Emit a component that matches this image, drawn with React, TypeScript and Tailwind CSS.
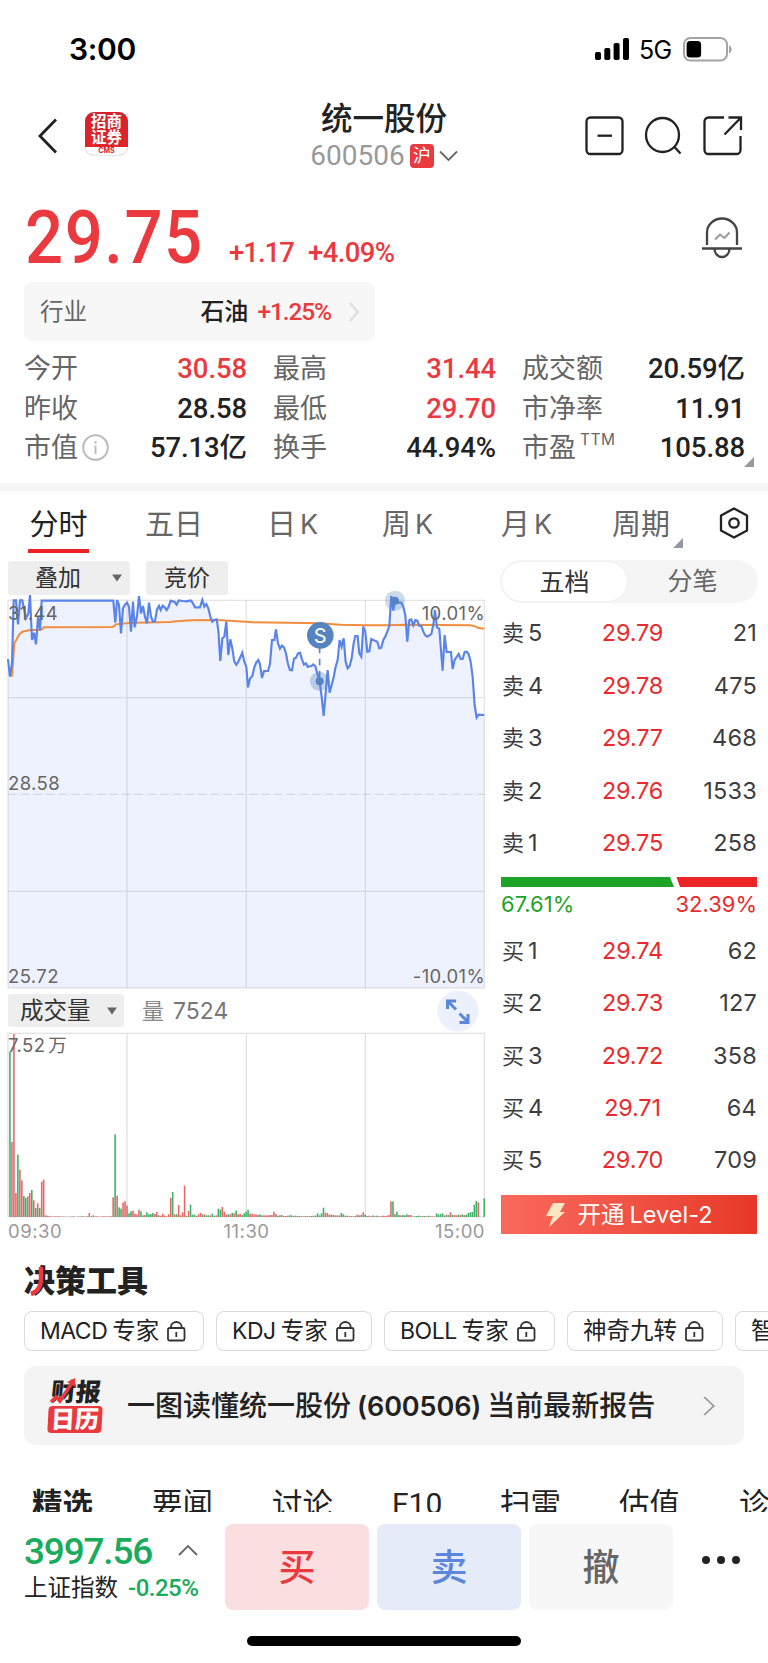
import type { ReactNode } from 'react'

// Both charts are drawn at three units per pixel
const PRICE_LINE =
  '24,207 30,260 36,220 41,31 48,31 54,103 60,31 67,31 78,85 85,70 90,15 96,150 102,128 108,163 114,80 120,120 125,32 340,32 346,98 351,30 357,44 363,130 369,55 375,44 381,38 387,50 393,125 399,35 404,112 411,78 417,18 423,70 429,48 435,80 441,100 447,38 453,80 459,94 465,94 471,58 477,48 482,60 488,47 494,52 500,60 506,50 512,32 524,36 530,44 536,31 548,33 560,34 572,31 578,38 585,52 600,52 607,30 613,50 619,42 625,55 631,80 637,95 643,90 650,88 655,120 661,213 667,145 673,140 679,95 685,195 691,148 697,175 703,215 709,224 715,215 727,188 733,215 739,230 744,292 750,266 757,258 763,232 769,217 775,210 780,222 786,264 792,243 804,243 810,222 816,150 823,150 828,118 834,160 840,176 846,167 852,172 858,190 864,222 870,240 876,241 882,206 888,203 894,190 900,188 906,208 912,224 918,220 923,230 934,228 940,223 946,228 952,250 959,275 965,320 971,378 977,310 983,240 989,308 995,285 1001,262 1007,230 1013,210 1019,150 1025,170 1031,145 1037,215 1043,235 1049,228 1055,205 1061,160 1066,138 1073,138 1078,190 1084,200 1090,110 1096,125 1102,185 1108,184 1114,147 1120,150 1132,155 1138,175 1144,173 1150,150 1156,140 1162,125 1168,108 1174,18 1180,62 1185,32 1192,38 1204,38 1210,50 1216,75 1222,155 1228,90 1234,88 1240,106 1246,90 1252,92 1258,107 1264,108 1270,125 1276,136 1282,140 1288,136 1294,132 1300,105 1305,60 1311,112 1318,116 1323,180 1328,242 1334,135 1340,186 1353,186 1358,237 1364,210 1376,192 1382,207 1388,207 1394,186 1400,185 1406,192 1412,215 1418,260 1424,345 1430,383 1436,374 1453,375'

const AVG_LINE =
  '36,260 43,160 50,148 58,133 67,125 90,120 122,120 132,112 338,111 348,103 380,100 400,98 510,96 530,94 575,91 650,90 700,93 760,97 960,100 1020,104 1100,106 1160,106 1220,104 1410,106 1425,109 1436,114 1453,116'

// One entry per minute: colour and bar height
const VOLUME =
  'g496 r225 r549 r72 g187 r142 r110 g63 g57 r62 r72 g81 r50 g27 r41 g27 r106 r112 r5 r4 r3 r1 r1 r2 r2 r2 r1 r1 r1 r0 r1 r1 g2 r0 r1 r1 g2 r2 r1 g2 r12 r2 r5 g1 r2 r1 r1 r2 r2 r1 r2 r2 r59 g248 r64 g29 g25 r43 r47 r34 g11 g17 r19 r10 r8 r22 g17 g5 r6 g14 g8 g9 g12 r9 r15 g5 r4 r10 r4 r2 r8 r57 g75 r8 g8 r36 r5 r14 r94 g3 r18 g37 g7 g7 r3 r8 r13 g8 r8 g5 g5 r5 g10 g4 r5 g25 g22 r30 r16 r7 g8 r8 g12 r11 g19 r8 r10 g6 g11 g16 g22 r10 r10 r8 r8 g6 g8 r5 r5 r5 r5 r6 r6 r16 r9 g4 g5 r6 r3 r3 g4 g5 g5 r3 g4 r3 r3 g2 r2 r3 g2 r3 g3 r4 g4 g11 g5 g11 g28 r13 r12 r7 g7 r6 r5 r5 r5 g12 g8 r4 g4 r2 r3 g2 r3 r7 g5 r6 r14 g7 g3 r4 r2 g5 r2 g4 r2 r2 r4 r3 r4 r6 r47 g47 r9 g16 g6 r5 g6 g5 g8 r6 r6 r1 g2 g3 g4 g2 r3 g3 r2 g4 r2 r2 r1 g11 g8 g9 g11 g5 r7 g6 r14 g7 r6 r5 g7 r6 g8 r6 g7 g12 g14 g15 g37 g48 r44 r0 r0 g56'

const sells = [['5', '29.79', '21'], ['4', '29.78', '475'], ['3', '29.77', '468'], ['2', '29.76', '1533'], ['1', '29.75', '258']]
const buys = [['1', '29.74', '62'], ['2', '29.73', '127'], ['3', '29.72', '358'], ['4', '29.71', '64'], ['5', '29.70', '709']]

function Caret() {
  return (
    <svg width="10" height="8" viewBox="0 0 10 8">
      <path d="M0 .5h10L5 7.5z" fill="#666" />
    </svg>
  )
}

function Chevron({ className, stroke, width = 2 }: { className: string; stroke: string; width?: number }) {
  return (
    <svg className={className} viewBox="0 0 10 20" fill="none" stroke={stroke} strokeWidth={width} preserveAspectRatio="none">
      <path d="M1 1l8 9-8 9" />
    </svg>
  )
}

function StatusBar() {
  return (
    <div className="flex h-[98px] shrink-0 items-center pl-[69px] pr-[36px]">
      <span className="text-[30px] font-semibold tracking-[-0.3px] text-black">3:00</span>
      <svg className="ml-auto" width="35" height="24" viewBox="0 0 35 24">
        <rect x="0" y="15" width="6" height="8" rx="1.8" />
        <rect x="9.3" y="11" width="6" height="12" rx="1.8" />
        <rect x="18.6" y="6" width="6" height="17" rx="1.8" />
        <rect x="28" y="1" width="6" height="22" rx="1.8" />
      </svg>
      <span className="ml-[9px] mt-[3px] w-[34px] text-[25px] tracking-[-0.8px] text-black">5G</span>
      <svg className="ml-[10px]" width="49" height="25" viewBox="0 0 49 25">
        <rect x="1" y="1" width="43" height="22.5" rx="6.5" fill="none" stroke="#a3a3a3" strokeWidth="2" />
        <rect x="3.6" y="4" width="14.5" height="16.5" rx="3.5" />
        <path d="M46 8.2a4.5 4.5 0 0 1 0 8.2z" fill="#a3a3a3" />
      </svg>
    </div>
  )
}

function Header() {
  return (
    <div className="flex h-[76px] shrink-0 items-center pl-[38px] pr-[25px]">
      <svg width="20" height="36" viewBox="0 0 20 36" fill="none" stroke="#222" strokeWidth="2.8">
        <path d="M18 1.5L2 18l16 16.5" />
      </svg>
      <div className="ml-[27px] mt-[-4px] flex h-[44px] w-[43px] flex-col overflow-hidden rounded-[9px] border-b border-gray-200 bg-gradient-to-b from-[#d3222a] to-[#e2262a] text-center text-white">
        <div className="flex h-[36px] flex-col items-center justify-center text-[15.5px] font-bold leading-[16px]">
          <span>招商</span>
          <span>证券</span>
        </div>
        <div className="h-[8px] bg-white text-[7px] font-bold leading-[7px] text-[#d3222a]">CMS</div>
      </div>
      <div className="flex flex-1 flex-col items-center pl-[55px]">
        <div className="pt-[2px] text-[31.5px] font-medium leading-[38px] text-[#222]">统一股份</div>
        <div className="flex h-[36px] items-center">
          <span className="font-[Roboto] text-[28px] text-[#999]">600506</span>
          <span className="ml-[5px] flex size-[24px] items-center justify-center rounded-[4px] bg-[#ea3a3f] text-[18px] text-white">沪</span>
          <svg className="ml-[5px]" width="19" height="12" viewBox="0 0 19 12" fill="none" stroke="#666" strokeWidth="1.8">
            <path d="M1 1.5l8.5 8.5L18 1.5" />
          </svg>
        </div>
      </div>
      <svg width="158" height="40" viewBox="0 0 158 40" fill="none" stroke="#222" strokeWidth="2.3">
        <rect x="1.5" y="1.5" width="36" height="36.5" rx="4" />
        <path d="M12.500 19.700H27" />
        <ellipse cx="77.500" cy="19" rx="16.500" ry="17" />
        <path d="M89.500 31l6 6.500" />
        <path d="M139 1.500h-15.500a4 4 0 0 0-4 4V34a4 4 0 0 0 4 4h28a4 4 0 0 0 4-4V20M143.500 1.500h12.500V14M155.500 2l-16 16.500" />
      </svg>
    </div>
  )
}

function PriceRow() {
  return (
    <div className="flex h-[102px] shrink-0 pl-[25px] pr-[26px] font-[Roboto] font-medium text-[#ea3a3f]">
      <span className="mt-[26px] w-[204px] origin-left scale-x-90 text-[74.500px] leading-[76px] tracking-[1.700px]">29.75</span>
      <span className="mt-[61px] w-[79px] text-[27.500px] leading-[36px] tracking-[-1px]">+1.17</span>
      <span className="mt-[61px] text-[27.500px] leading-[36px] tracking-[-0.600px]">+4.09%</span>
      <svg className="ml-auto mt-[43px]" width="40" height="42" viewBox="0 0 40 42" fill="none" stroke="#444" strokeWidth="2.300">
        <path d="M0 31.500h40M5 28V15.500a15 14 0 0 1 30 0V28M12.500 32a7.500 8 0 0 0 15 0" />
        <path d="M13 22.500l5-5 4.500 3.500 5-5.500" stroke="#999" strokeWidth="2" />
      </svg>
    </div>
  )
}

function Stat({ label, value, red, extra }: { label: string; value: string; red?: boolean; extra?: ReactNode }) {
  return (
    <div className="flex items-center">
      <span className="text-[27px] text-[#666]">{label}</span>
      {extra}
      <span className={`ml-auto font-[Roboto,'Noto_Sans_CJK_SC'] text-[27.500px] font-medium tracking-[-0.1px] ${red ? 'text-[#ea3a3f]' : 'text-[#222]'}`}>{value}</span>
    </div>
  )
}

function Quote() {
  return (
    <div className="relative flex h-[207px] shrink-0 flex-col px-[24px] pt-[6px]">
      <div className="flex h-[59px] w-[351px] items-center rounded-[8px] bg-[#f7f7f7] px-[16px] pt-px">
        <span className="text-[23.500px] text-[#666]">行业</span>
        <span className="ml-auto text-[24px] font-medium text-[#222]">石油</span>
        <span className="ml-[9px] font-[Roboto] text-[24.500px] font-medium tracking-[-1.100px] text-[#ea3a3f]">+1.25%</span>
        <Chevron className="ml-[18px] h-[20px] w-[10px]" stroke="#ddd" />
      </div>
      <div className="mt-[8px] grid grid-cols-[223px_223px_223px] grid-rows-[39.500px_39.500px_39.500px] gap-x-[26px]">
        <Stat label="今开" value="30.58" red />
        <Stat label="最高" value="31.44" red />
        <Stat label="成交额" value="20.59亿" />
        <Stat label="昨收" value="28.58" />
        <Stat label="最低" value="29.70" red />
        <Stat label="市净率" value="11.91" />
        <Stat
          label="市值"
          value="57.13亿"
          extra={
            <svg className="ml-[4px]" width="27" height="27" viewBox="0 0 27 27" fill="none" stroke="#bbb" strokeWidth="2">
              <circle cx="13.500" cy="13.500" r="12.300" />
              <path d="M13.500 11.500V20M13.500 7v2.500" />
            </svg>
          }
        />
        <Stat label="换手" value="44.94%" />
        <Stat label="市盈" value="105.88" extra={<span className="mb-[17px] ml-[4px] text-[15.500px] tracking-[0.5px] text-[#666]">TTM</span>} />
      </div>
      <svg className="absolute right-[14px] top-[181px]" width="10" height="10" viewBox="0 0 10 10">
        <path d="M10 0v10H0z" fill="#999" />
      </svg>
    </div>
  )
}

function PeriodTabs() {
  return (
    <div className="grid h-[70px] shrink-0 grid-cols-[117px_122px_115px_119px_107px_101px_1fr] pl-[28px] text-[29px] text-[#666]">
      <div className="flex h-[62px] w-[61px] items-center justify-center border-b-[4px] border-[#ee2224] pt-[8px] text-[#222]">分时</div>
      <div className="flex h-[66px] items-center">五日</div>
      <div className="flex h-[66px] items-center gap-[4px]">日<span className="text-[27px]">K</span></div>
      <div className="flex h-[66px] items-center gap-[4px]">周<span className="text-[27px]">K</span></div>
      <div className="flex h-[66px] items-center gap-[4px]">月<span className="text-[27px]">K</span></div>
      <div className="relative flex h-[66px] items-center pl-[4px]">
        周期
        <svg className="absolute left-[65px] top-[47px]" width="10" height="10" viewBox="0 0 10 10">
          <path d="M10 0v10H0z" fill="#9599a3" />
        </svg>
      </div>
      <svg className="ml-[10px] mt-[16px]" width="30" height="32" viewBox="0 0 30 32" fill="none" stroke="#222" strokeWidth="2.300">
        <path d="M15 1.500L28 8.500v15L15 30.500 2 23.500v-15z" strokeLinejoin="round" />
        <circle cx="15" cy="16" r="4.700" />
      </svg>
    </div>
  )
}

function PriceChart() {
  return (
    <div className="relative mt-[2px] h-[393px] text-[18.500px] leading-[18px] tracking-[0.400px] text-[#666]">
      <svg className="block overflow-visible" width="476.300" height="393" viewBox="24 21 1429 1179" fill="none">
        <polygon points={`24,1194 ${PRICE_LINE} 1453,1194`} fill="#eef2fe" />
        <g stroke="#000" strokeOpacity="0.1" strokeWidth="4">
          <rect x="24" y="31" width="1429" height="1163" />
          <path d="M381 31v1163M739 31v1163M1096 31v1163M24 323h1429M24 904h1429" />
          <path d="M24 613h1429" strokeDasharray="26 12" />
        </g>
        <polyline points={AVG_LINE} stroke="#f28c3e" strokeWidth="6" />
        <polyline points={PRICE_LINE} stroke="#5a84ea" strokeWidth="6.500" />
        <g fill="#5584c0">
          <circle cx="959" cy="274" r="29" fillOpacity="0.35" />
          <circle cx="959" cy="274" r="12" />
          <circle cx="1185" cy="32" r="30" fillOpacity="0.3" />
          <circle cx="1185" cy="32" r="12" />
          <path d="M959 170v100" stroke="#5584c0" strokeWidth="5" strokeDasharray="20 16" />
          <circle cx="961" cy="136" r="40" />
        </g>
        <text x="961" y="158" textAnchor="middle" fontSize="60" fontFamily="Inter" fill="#fff">S</text>
      </svg>
      <span className="absolute left-0 top-[7px]">31.44</span>
      <span className="absolute right-0 top-[7px]">10.01%</span>
      <span className="absolute left-0 top-[177px]">28.58</span>
      <span className="absolute bottom-[5px] left-0">25.72</span>
      <span className="absolute bottom-[5px] right-0">-10.01%</span>
    </div>
  )
}

function VolumeChart() {
  return (
    <div className="relative h-[187px]">
      <svg className="block overflow-visible" width="476.300" height="187" viewBox="24 213 1429 561" fill="none">
        <g stroke="#e2e2e4" strokeWidth="4">
          <rect x="24" y="220" width="1429" height="550" />
          <path d="M381 220v550M739 220v550M1096 220v550" />
        </g>
        {VOLUME.split(' ').map((v, i) => {
          const h = Number(v.slice(1))
          return <rect key={i} x={24 + 5.954 * (i + 1) - 2.500} y={771 - h} width="4.800" height={h} fill={v[0] === 'g' ? '#3fb26a' : '#e8686a'} />
        })}
      </svg>
      <span className="absolute left-0 top-[5px] text-[18.500px] leading-[18px] tracking-[0.400px] text-[#666]">
        7.52<span className="ml-[3px]">万</span>
      </span>
    </div>
  )
}

function ChartColumn() {
  return (
    <div className="ml-[8px] flex w-[477px] flex-col">
      <div className="flex h-[34px] gap-[16px] text-[23px] leading-[35px] text-[#333]">
        <div className="flex w-[122px] items-center rounded-[3px] bg-[#eee] pl-[27px] pr-[8px]">
          叠加<span className="ml-auto"><Caret /></span>
        </div>
        <div className="w-[82px] rounded-[3px] bg-[#eee] text-center">竞价</div>
      </div>
      <PriceChart />
      <div className="flex h-[41px] items-center">
        <div className="flex h-[33px] w-[116px] items-center rounded-[3px] bg-[#eee] pl-[12px] pr-[7px] pt-px text-[23.500px] text-[#333]">
          成交量<span className="ml-auto"><Caret /></span>
        </div>
        <span className="ml-[18px] pt-px text-[22px] text-[#888]">量</span>
        <span className="ml-[9px] pt-px text-[23px] text-[#777]">7524</span>
        <svg className="ml-auto mr-[6px]" width="42" height="42" viewBox="0 0 42 42" fill="none" stroke="#5b86dc" strokeWidth="3">
          <circle cx="21" cy="21" r="20.500" fill="#ebf0fb" stroke="none" />
          <path d="M19 11h-8.500v8M11 11.500l8 8M31 24v8.500h-8.500M31 32l-8.500-8.500" />
        </svg>
      </div>
      <VolumeChart />
      <div className="flex justify-between pt-[3px] text-[18.500px] leading-[20px] tracking-[0.500px] text-[#999]">
        <span>09:30</span>
        <span className="mr-[4px]">11:30</span>
        <span>15:00</span>
      </div>
    </div>
  )
}

function Level({ side, row }: { side: string; row: string[] }) {
  return (
    <div className="flex h-[52.400px] items-center pl-[1px] text-[23.500px] text-[#3d3d3f]">
      <span className="w-[99px] text-[22px]">
        {side}<span className="ml-[4px] text-[23.500px]">{row[0]}</span>
      </span>
      <span className="w-[63px] text-center tracking-[-0.200px] text-[#ea2a2c]">{row[1]}</span>
      <span className="ml-auto tracking-[0.200px]">{row[2]}</span>
    </div>
  )
}

function OrderBook() {
  return (
    <div className="ml-[16px] flex w-[256px] flex-col">
      <div className="-mx-px mt-[-1px] flex h-[43px] rounded-full bg-[#f5f5f5] p-[1px] text-center text-[25px] leading-[40px] text-[#666]">
        <div className="w-[127px] rounded-full border border-[#efefef] bg-white text-[#333]">五档</div>
        <div className="flex-1">分笔</div>
      </div>
      <div className="mt-[4px]">
        {sells.map(r => <Level key={r[0]} side="卖" row={r} />)}
      </div>
      <svg className="mt-[8px] h-[10px] shrink-0" width="256" height="10" viewBox="0 0 256 10">
        <path d="M0 0h169l4 10H0z" fill="#1ea329" />
        <path d="M175.500 0H256v10h-77z" fill="#ee2526" />
      </svg>
      <div className="mt-[7px] flex justify-between text-[22px] leading-[20px]">
        <span className="text-[#1ea329]">67.61%</span>
        <span className="text-[#ea2a2c]">32.39%</span>
      </div>
      <div className="mt-[10.500px]">
        {buys.map(r => <Level key={r[0]} side="买" row={r} />)}
      </div>
      <div className="mt-[8.500px] flex h-[39px] items-center justify-center bg-gradient-to-r from-[#f9695c] to-[#e73828] pt-px text-[23.500px] text-white">
        <svg className="mr-[11px]" width="21" height="24" viewBox="0 0 21 24">
          <path d="M8 0h12l-5 9h5L4 24l4-11H1z" fill="#ffe6c0" />
        </svg>
        开通<span className="ml-[5px]">Level-2</span>
      </div>
    </div>
  )
}

function Chip({ latin, label, width }: { latin?: string; label: string; width: string }) {
  return (
    <div className={`flex h-[40px] shrink-0 items-center rounded-[8px] border-[1.500px] border-[#d9d9d9] pl-[15px] text-[23.500px] text-[#222] ${width}`}>
      {latin && <span className="mr-[5px] text-[23px] tracking-[-0.500px]">{latin}</span>}
      {label}
      <svg className="ml-[8px] shrink-0" width="19" height="21" viewBox="0 0 19 21" fill="none" stroke="#333" strokeWidth="1.800">
        <rect x="1" y="7" width="16.500" height="12.500" rx="1.500" />
        <path d="M4 7V5.500a5.300 4.500 0 0 1 10.600 0V7M9.300 11v5" />
      </svg>
    </div>
  )
}

function Tools() {
  return (
    <div className="flex h-[204px] shrink-0 flex-col pl-[24px] pt-[20px]">
      <div className="relative text-[31px] font-black leading-[40px] text-[#222]">
        决策工具
        <svg className="absolute left-[6px] top-[5px]" width="14" height="31" viewBox="0 0 14 31" fill="none" stroke="#ea3a3f" strokeWidth="4.500">
          <path d="M11 1v14Q10 25 1 28" />
        </svg>
      </div>
      <div className="mt-[10px] flex gap-[12px] overflow-hidden">
        <Chip latin="MACD" label="专家" width="w-[180px]" />
        <Chip latin="KDJ" label="专家" width="w-[156px]" />
        <Chip latin="BOLL" label="专家" width="w-[171px]" />
        <Chip label="神奇九转" width="w-[156px]" />
        <Chip label="智能盯盘" width="w-[156px]" />
      </div>
      <div className="mt-[15px] flex h-[79px] w-[720px] shrink-0 items-center rounded-[12px] bg-[#f4f4f4] pl-[24px] pr-[29px] pt-px">
        <div className="relative h-[56px] w-[55px]">
          <div className="-skew-x-6 pl-[3px] text-[25px] font-black leading-[28px] text-[#222]">财报</div>
          <div className="flex h-[27px] w-[54px] -skew-x-3 items-center justify-center rounded-[4px] bg-[#ea3a3f] text-[24px] font-black text-white">日历</div>
          <svg className="absolute left-[2px] top-0" width="28" height="28" viewBox="0 0 28 28" fill="none" stroke="#ea3a3f" strokeWidth="3.500">
            <path d="M1 24l5-5 4 4L22 5" />
            <path d="M17 4l8-4 .5 9z" fill="#ea3a3f" stroke="none" />
          </svg>
        </div>
        <span className="ml-[24px] text-[28px] font-medium text-[#222]">一图读懂统一股份</span>
        <span className="ml-[6px] text-[27px] font-semibold tracking-[-0.100px] text-[#222]">(600506)</span>
        <span className="ml-[6px] text-[28px] font-medium text-[#222]">当前最新报告</span>
        <Chevron className="ml-auto h-[20px] w-[12px]" stroke="#999" width={1.600} />
      </div>
    </div>
  )
}

function NewsTabs() {
  return (
    <div className="flex h-[67px] shrink-0 overflow-hidden pl-[32px] pt-[37px] text-[30.500px] leading-[44px] text-[#222]">
      <span className="w-[120px] shrink-0 font-bold">精选</span>
      <span className="w-[120px] shrink-0">要闻</span>
      <span className="w-[120px] shrink-0">讨论</span>
      <span className="w-[108px] shrink-0 font-[Roboto] text-[30px]">F10</span>
      <span className="w-[119px] shrink-0">扫雷</span>
      <span className="w-[120px] shrink-0">估值</span>
      <span className="shrink-0">诊股</span>
    </div>
  )
}

function TradeBar() {
  return (
    <div className="flex h-[151px] shrink-0 flex-col bg-white">
      <div className="flex pl-[24px] pt-[12px]">
        <div className="w-[201px]">
          <div className="flex h-[54px] items-center font-[Roboto] text-[37px] font-medium tracking-[-1.200px] text-[#1aab5c]">
            3997.56
            <svg className="-mt-[3px] ml-[26px]" width="20" height="12" viewBox="0 0 20 12" fill="none" stroke="#666" strokeWidth="1.800">
              <path d="M1 11l9-9 9 9" />
            </svg>
          </div>
          <div className="flex h-[20px] items-center">
            <span className="text-[23.500px] text-[#222]">上证指数</span>
            <span className="ml-[10px] font-[Roboto] text-[24px] font-medium tracking-[-0.500px] text-[#1aab5c]">-0.25%</span>
          </div>
        </div>
        <div className="flex gap-[8px] text-center text-[37px] font-medium leading-[88px]">
          <div className="h-[86px] w-[144px] rounded-[8px] bg-[#fbdfe0] text-[#ea3a3f]">买</div>
          <div className="h-[86px] w-[144px] rounded-[8px] bg-[#e5ebf8] text-[#5b86dc]">卖</div>
          <div className="h-[86px] w-[144px] rounded-[8px] bg-[#f7f7f7] text-[#666]">撤</div>
        </div>
        <div className="ml-[29px] mt-[32px] flex gap-[7px]">
          <i className="size-[8px] rounded-full bg-[#222]" />
          <i className="size-[8px] rounded-full bg-[#222]" />
          <i className="size-[8px] rounded-full bg-[#222]" />
        </div>
      </div>
      <div className="ml-[247px] mt-[26px] h-[10px] w-[274px] rounded-full bg-black" />
    </div>
  )
}

export default function App() {
  return (
    <div className="flex h-[1663px] w-[768px] flex-col overflow-hidden bg-white font-[Inter,'Noto_Sans_CJK_SC',sans-serif] leading-none whitespace-nowrap">
      <StatusBar />
      <Header />
      <PriceRow />
      <Quote />
      <div className="h-[8px] shrink-0 bg-[#f5f5f5]" />
      <PeriodTabs />
      <div className="flex h-[680px] shrink-0">
        <ChartColumn />
        <OrderBook />
      </div>
      <Tools />
      <NewsTabs />
      <TradeBar />
    </div>
  )
}
